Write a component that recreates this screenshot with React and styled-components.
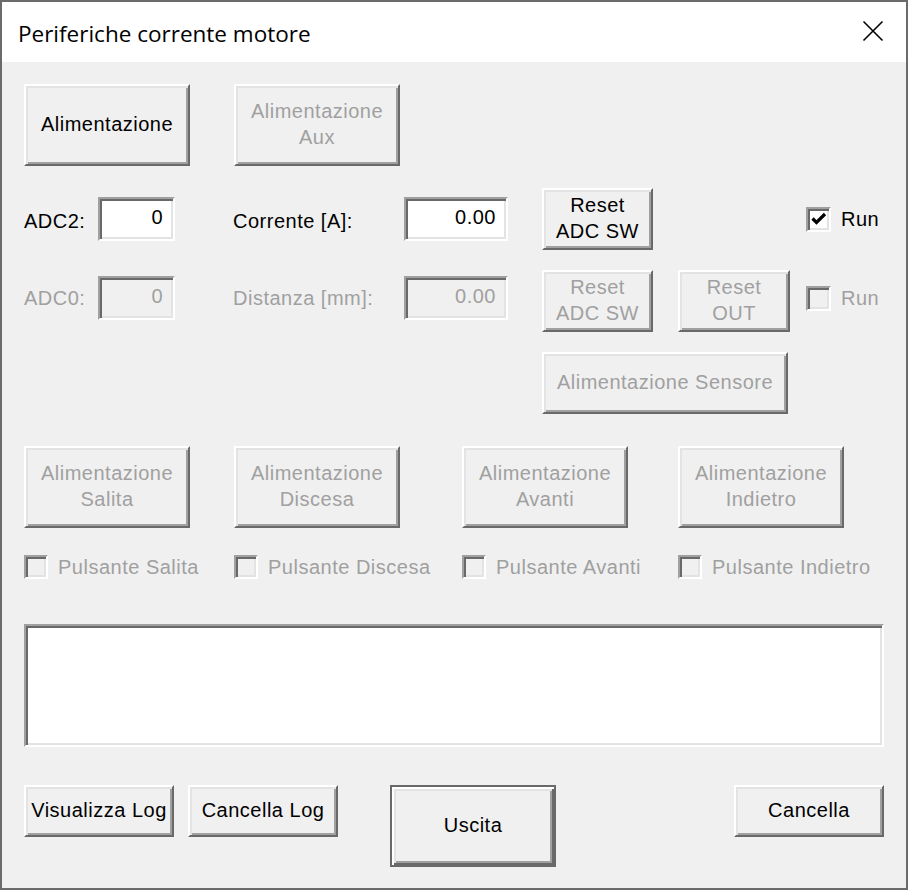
import React from 'react'
import styled, { createGlobalStyle, css } from 'styled-components'

const GlobalStyle = createGlobalStyle`
  html, body {
    margin: 0;
    padding: 0;
    background: #f0f0f0;
  }
  * {
    box-sizing: border-box;
  }
`

const raised = css`
  border: 2px solid;
  border-color: #ffffff #696969 #696969 #ffffff;
  box-shadow: inset 2px 2px 0 #e3e3e3, inset -2px -2px 0 #a0a0a0;
`

const sunken = css`
  border: 2px solid;
  border-color: #a0a0a0 #ffffff #ffffff #a0a0a0;
  box-shadow: inset 2px 2px 0 #696969, inset -2px -2px 0 #e3e3e3;
`

const Window = styled.div`
  width: 908px;
  height: 890px;
  border: 2px solid #6b6b6b;
  display: flex;
  flex-direction: column;
  font-family: "Liberation Sans", Arial, sans-serif;
  font-size: 20px;
  letter-spacing: 0.5px;
  color: #000;
  overflow: hidden;
`

const TitleBar = styled.div`
  height: 60px;
  background: #ffffff;
  display: flex;
  align-items: center;
  justify-content: space-between;
  padding: 0 22px 0 16px;
`

const Title = styled.span`
  font-family: "Open Sans", "Noto Sans", sans-serif;
  font-size: 22.5px;
  letter-spacing: 0;
  color: #000;
  padding-top: 2px;
`

const CloseButton = styled.span`
  display: flex;
  width: 22px;
  height: 22px;
  margin-top: -2px;
`

const Body = styled.div`
  flex: 1;
  background: #f0f0f0;
  padding: 22px 22px 0 22px;
  display: flex;
  flex-direction: column;
`

const Button = styled.div`
  ${p => (p.$default ? css`
    border: 2px solid #696969;
    box-shadow: inset 2px 2px 0 #ffffff, inset -2px -2px 0 #696969,
      inset 4px 4px 0 #e3e3e3, inset -4px -4px 0 #a0a0a0;
  ` : raised)}
  width: ${p => p.$w || 166}px;
  height: ${p => p.$h || 82}px;
  background: #f0f0f0;
  display: flex;
  align-items: center;
  justify-content: center;
  text-align: center;
  line-height: 26px;
  color: ${p => (p.$disabled ? '#a0a0a0' : '#000')};
  white-space: pre-line;
  flex-shrink: 0;
  justify-self: start;
  padding-bottom: 2px;
`

const TopRow = styled.div`
  display: flex;
  gap: 44px;
`

const ControlGrid = styled.div`
  margin-top: 22px;
  display: grid;
  grid-template-columns: 74px 77px 58px 171px 104px 34px 111px 25px 112px 16px 1fr;
  grid-auto-rows: 62px;
  row-gap: 20px;
  align-items: center;
`

const Label = styled.span`
  grid-column: ${p => p.$col};
  color: ${p => (p.$disabled ? '#a0a0a0' : '#000')};
  white-space: nowrap;
  padding-top: ${p => (p.$disabled ? 0 : 5)}px;
  padding-bottom: ${p => (p.$disabled ? 5 : 0)}px;
`

const Edit = styled.div`
  ${sunken}
  grid-column: ${p => p.$col};
  height: 44px;
  background: ${p => (p.$disabled ? '#f0f0f0' : '#ffffff')};
  color: ${p => (p.$disabled ? '#a0a0a0' : '#000')};
  display: flex;
  justify-content: flex-end;
  align-items: flex-start;
  padding: 6px 10px 0 0;
  line-height: 24px;
  margin-bottom: ${p => (p.$disabled ? 6 : 0)}px;
`

const Slot = styled.div`
  grid-column: ${p => p.$col};
  display: flex;
`

const CheckRow = styled.div`
  grid-column: ${p => p.$col};
  display: flex;
  align-items: center;
  gap: ${p => p.$gap || 10}px;
  color: ${p => (p.$disabled ? '#a0a0a0' : '#000')};
  white-space: nowrap;
  margin-bottom: ${p => p.$lift || 0}px;
`

const Box = styled.span`
  ${sunken}
  width: ${p => p.$size || 24}px;
  height: ${p => p.$size || 24}px;
  background: ${p => (p.$disabled ? '#f0f0f0' : '#ffffff')};
  display: flex;
  align-items: center;
  justify-content: center;
  flex-shrink: 0;
`

const FeedGrid = styled.div`
  margin-top: 32px;
  display: grid;
  grid-template-columns: 210px 228px 216px 1fr;
`

const FeedCell = styled.div`
  display: flex;
  flex-direction: column;
  gap: 27px;
`

const LogBox = styled.div`
  ${sunken}
  margin-top: 45px;
  height: 123px;
  background: #ffffff;
`

const BottomRow = styled.div`
  margin-top: 38px;
  display: flex;
  align-items: flex-start;
`

const Spacer = styled.div`
  width: ${p => p.$w}px;
  flex-shrink: 0;
`

const Push = styled.div`
  flex: 1;
`

const CheckMark = () => (
  <svg width="16" height="14" viewBox="0 0 16 14">
    <polyline points="1.5,6.5 5.5,10.5 14,2" fill="none" stroke="#000" strokeWidth="3.2" />
  </svg>
)

const Check = ({ checked, disabled, label, col, size, gap, lift }) => (
  <CheckRow $col={col} $disabled={disabled} $gap={gap} $lift={lift}>
    <Box $disabled={disabled} $size={size}>
      {checked && <CheckMark />}
    </Box>
    {label}
  </CheckRow>
)

const feeds = ['Salita', 'Discesa', 'Avanti', 'Indietro']

export default function App() {
  return (
    <>
      <GlobalStyle />
      <Window>
        <TitleBar>
          <Title>Periferiche corrente motore</Title>
          <CloseButton>
            <svg width="22" height="22" viewBox="0 0 22 22">
              <path d="M1.5 1.5 L20.5 20.5 M20.5 1.5 L1.5 20.5" stroke="#000" strokeWidth="1.6" fill="none" />
            </svg>
          </CloseButton>
        </TitleBar>
        <Body>
          <TopRow>
            <Button>Alimentazione</Button>
            <Button $disabled>{'Alimentazione\nAux'}</Button>
          </TopRow>

          <ControlGrid>
            <Label $col={1}>ADC2:</Label>
            <Edit $col={2}>0</Edit>
            <Label $col={4}>Corrente [A]:</Label>
            <Edit $col={5}>0.00</Edit>
            <Slot $col={7}><Button $w={111} $h={62}>{'Reset\nADC SW'}</Button></Slot>
            <Check col={11} checked label="Run" size={25} />

            <Label $col={1} $disabled>ADC0:</Label>
            <Edit $col={2} $disabled>0</Edit>
            <Label $col={4} $disabled>Distanza [mm]:</Label>
            <Edit $col={5} $disabled>0.00</Edit>
            <Slot $col={7}><Button $w={111} $h={62} $disabled>{'Reset\nADC SW'}</Button></Slot>
            <Slot $col={9}><Button $w={112} $h={62} $disabled>{'Reset\nOUT'}</Button></Slot>
            <Check col={11} disabled label="Run" size={25} lift={6} />

            <Slot $col="7 / 10"><Button $w={246} $h={62} $disabled>Alimentazione Sensore</Button></Slot>
          </ControlGrid>

          <FeedGrid>
            {feeds.map(f => (
              <FeedCell key={f}>
                <Button $disabled>{`Alimentazione\n${f}`}</Button>
                <Check disabled label={`Pulsante ${f}`} />
              </FeedCell>
            ))}
          </FeedGrid>

          <LogBox />

          <BottomRow>
            <Button $w={150} $h={52}>Visualizza Log</Button>
            <Spacer $w={14} />
            <Button $w={150} $h={52}>Cancella Log</Button>
            <Spacer $w={52} />
            <Button $w={166} $h={82} $default>Uscita</Button>
            <Push />
            <Button $w={150} $h={52}>Cancella</Button>
          </BottomRow>
        </Body>
      </Window>
    </>
  )
}
